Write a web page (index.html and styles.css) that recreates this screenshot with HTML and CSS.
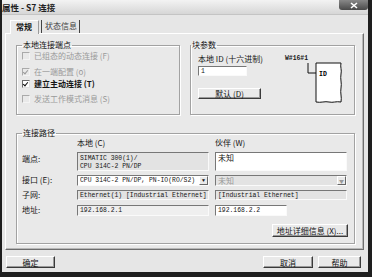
FILE: index.html
```html
<!DOCTYPE html>
<html lang="zh">
<head>
    <meta charset="UTF-8">
    <title>属性 - S7 连接</title>
    <link rel="stylesheet" href="styles.css">
</head>
<body>
    <div class="window">
        <div class="titlebar">
            <span class="title">属性 - S7 连接</span>
            <span class="close">
                <svg width="8" height="7" viewBox="0 0 8 7"><path d="M1 1 L7 6 M7 1 L1 6" stroke="#fff" stroke-width="1.6"/></svg>
            </span>
        </div>

        <div class="tabs">
            <span class="tab active">常规</span>
            <span class="tab">状态信息</span>
        </div>

        <div class="panel">
            <div class="top-row">
                <fieldset class="group local-end">
                    <legend>本地连接端点</legend>
                    <div class="check row1 disabled"><span class="box"></span>已组态的动态连接 (F)</div>
                    <div class="check row2 disabled"><span class="box checked"></span>在一端配置 (o)</div>
                    <div class="check row3"><span class="box checked"></span><b>建立主动连接 (T)</b></div>
                    <div class="check row4 disabled"><span class="box"></span>发送工作模式消息 (S)</div>
                </fieldset>

                <fieldset class="group block-params">
                    <legend>块参数</legend>
                    <div class="block-body">
                        <div class="block-left">
                            <div class="id-label">本地 ID (十六进制)</div>
                            <div class="field white id-input mono">1</div>
                            <button class="btn default-btn">默认 (D)</button>
                        </div>
                        <div class="block-right">
                            <div class="wvalue mono">W#16#1</div>
                            <svg class="diagram" width="40" height="44" viewBox="0 0 40 44">
                                <path d="M3 1 V11 H11" fill="none" stroke="#111" stroke-width="1"/>
                                <path d="M11 1 H36 C35 5 37 8 36 12 C35 17 37 21 36 26 C35 31 37 35 36 40 C31 39 28 41 24 40 C20 39 16 41 11 40 Z" fill="#fff" stroke="#111" stroke-width="1"/>
                                <text x="14" y="14" font-size="6.5" font-weight="bold" font-family="Liberation Mono, monospace">ID</text>
                            </svg>
                        </div>
                    </div>
                </fieldset>
            </div>

            <fieldset class="group path">
                <legend>连接路径</legend>
                <div class="prow head">
                    <span></span>
                    <span>本地 (C)</span>
                    <span>伙伴 (W)</span>
                </div>
                <div class="prow endpoint">
                    <span class="plabel">端点:</span>
                    <div class="field gray mono multi">SIMATIC 300(1)/<br>CPU 314C-2 PN/DP</div>
                    <div class="field white">未知</div>
                </div>
                <div class="prow iface">
                    <span class="plabel">接口 (E):</span>
                    <div class="field white combo mono"><span class="ctext">CPU 314C-2 PN/DP, PN-IO(RO/S2)</span><span class="arrow">▼</span></div>
                    <div class="field gray combo off"><span class="ctext">未知</span><span class="arrow">▼</span></div>
                </div>
                <div class="prow subnet">
                    <span class="plabel">子网:</span>
                    <div class="field gray mono"><span class="ctext">Ethernet(1) [Industrial Ethernet]</span></div>
                    <div class="field gray mono">[Industrial Ethernet]</div>
                </div>
                <div class="prow addr">
                    <span class="plabel">地址:</span>
                    <div class="field light mono">192.168.2.1</div>
                    <div class="field white mono short">192.168.2.2</div>
                </div>
                <div class="detail-row">
                    <button class="btn detail-btn">地址详细信息 (X)...</button>
                </div>
            </fieldset>
        </div>

        <div class="footer">
            <button class="btn ok-btn">确定</button>
            <span class="spacer"></span>
            <button class="btn cancel-btn">取消</button>
            <button class="btn help-btn">帮助</button>
        </div>
    </div>
</body>
</html>
```

FILE: styles.css
```css
* {
    box-sizing: border-box;
}
body {
    margin: 0;
    background: #fff;
    font-family: "Noto Sans CJK SC", sans-serif;
}
.window {
    width: 372px;
    height: 277px;
    background: #e6e6e6;
    border-left: 2px solid #1e1e1e;
    border-right: 4px solid #1e1e1e;
    border-bottom: 5px solid #1e1e1e;
    display: flex;
    flex-direction: column;
    font-size: 8px;
    line-height: 10px;
    color: #151515;
}
.titlebar {
    height: 15px;
    display: flex;
    justify-content: space-between;
    align-items: flex-start;
    background: linear-gradient(#f3f3f3, #d6d6d6);
    border-bottom: 1px solid #c4c4c4;
}
.title {
    font-size: 8.5px;
    line-height: 14px;
    font-weight: bold;
    color: #222;
}
.close {
    width: 29px;
    height: 10px;
    display: flex;
    align-items: center;
    justify-content: center;
    background: linear-gradient(#888, #4a4a4a);
    border-radius: 0 0 3px 3px;
}
.tabs {
    height: 18px;
    display: flex;
    align-items: flex-end;
    padding-left: 8px;
}
.tab {
    height: 13px;
    line-height: 12px;
    white-space: nowrap;
    color: #444;
}
.tab.active {
    width: 29px;
    padding-left: 5px;
    font-weight: bold;
    color: #111;
    border-top: 1px solid #fff;
    border-left: 1px solid #fff;
    border-right: 1px solid #9a9a9a;
    background: #e9e9e9;
    margin-bottom: -1px;
    height: 14px;
    position: relative;
    z-index: 1;
}
.tab + .tab {
    margin-left: 2px;
    padding: 0 2px 0 3px;
    border-left: 1px solid #444;
    border-right: 1px solid #444;
}
.panel {
    margin-left: 3px;
    width: 359px;
    height: 217px;
    border: 1px solid;
    border-color: #fff #6e6e6e #6e6e6e #fff;
    box-shadow: inset -1px -1px 0 #b8b8b8;
    background: #e9e9e9;
    padding: 6px 8px 0 10px;
}
.group {
    margin: 0;
    border: 1px solid #a2a2a2;
    box-shadow: inset 1px 1px 0 #fff, 1px 1px 0 #fff;
    padding: 0;
    min-width: 0;
}
.group legend {
    padding: 0 1px;
    margin-left: 0;
    font-size: 8px;
    line-height: 10px;
    color: #111;
}
.top-row {
    display: flex;
    gap: 10px;
}
.local-end {
    width: 164px;
    padding: 0 0 8px 5px;
}
.check {
    display: flex;
    align-items: center;
    gap: 4px;
    height: 10px;
    line-height: 10px;
}
.check.disabled {
    color: #9a9a9a;
}
.row1 { margin-top: 1px; }
.row2 { margin-top: 6px; }
.row3 { margin-top: 2px; }
.row4 { margin-top: 5px; }
.box {
    width: 8px;
    height: 8px;
    flex: none;
    background: #fff;
    border: 1px solid;
    border-color: #6a6a6a #e0e0e0 #e0e0e0 #6a6a6a;
    position: relative;
}
.disabled .box {
    background: #e9e9e9;
    border-color: #aaa #f4f4f4 #f4f4f4 #aaa;
}
.box.checked::after {
    content: "";
    position: absolute;
    left: 1px;
    top: 0;
    width: 2px;
    height: 4px;
    border: solid #111;
    border-width: 0 1.5px 1.5px 0;
    transform: rotate(40deg);
}
.disabled .box.checked::after {
    border-color: #999;
}
.block-params {
    flex: 1;
    padding: 0 0 8px 0;
}
.block-body {
    display: flex;
    padding-left: 7px;
}
.block-left {
    width: 87px;
}
.id-label {
    margin-top: 4px;
}
.id-input {
    margin-top: 2px;
    width: 49px;
    height: 10px;
}
.default-btn {
    margin-top: 12px;
    width: 63px;
    height: 11px;
}
.block-right {
    display: flex;
    flex-direction: column;
}
.wvalue {
    margin-top: 4px;
    font-weight: bold;
    line-height: 10px;
}
.diagram {
    display: block;
    margin-top: -2px;
    margin-left: 20px;
}
.mono {
    font-family: "Liberation Mono", monospace;
    font-size: 6.4px;
}
.field {
    border: 1px solid;
    border-color: #777 #fafafa #fafafa #777;
    padding: 0 2px;
    line-height: 9px;
    overflow: hidden;
    white-space: nowrap;
}
.field.white {
    background: #fff;
}
.field.gray {
    background: #e3e3e3;
}
.field.light {
    background: #efefef;
}
.field.multi {
    line-height: 8px;
    padding-top: 2px;
}
.combo {
    display: flex;
    align-items: center;
    padding-right: 0;
}
.ctext {
    flex: 1;
    overflow: hidden;
    white-space: nowrap;
}
.combo .arrow {
    width: 9px;
    height: 9px;
    flex: none;
    font-size: 5px;
    line-height: 8px;
    text-align: center;
    color: #111;
    background: #e9e9e9;
    border: 1px solid;
    border-color: #fff #666 #666 #fff;
}
.combo.off {
    color: #9a9a9a;
}
.combo.off .arrow {
    color: #999;
}
.path {
    margin-top: 13px;
    padding: 0 0 6px 5px;
}
.prow {
    display: grid;
    grid-template-columns: 49px 132px 132px;
    column-gap: 6px;
}
.plabel {
    line-height: 10px;
    white-space: nowrap;
}
.head {
    height: 10px;
}
.endpoint {
    margin-top: 4px;
    height: 19px;
}
.endpoint .plabel {
    margin-top: 2px;
}
.iface {
    margin-top: 4px;
    height: 11px;
}
.subnet {
    margin-top: 4px;
    height: 10px;
}
.addr {
    margin-top: 5px;
    height: 11px;
}
.addr .field {
    line-height: 10px;
}
.field.short {
    width: 72px;
}
.detail-row {
    display: flex;
    justify-content: flex-end;
    padding-right: 6px;
    margin-top: 8px;
}
.btn {
    font-family: "Noto Sans CJK SC", sans-serif;
    font-size: 8px;
    line-height: 9px;
    padding: 0;
    color: #111;
    background: #e9e9e9;
    border: 1px solid;
    border-color: #fff #3a3a3a #3a3a3a #fff;
    box-shadow: inset -1px -1px 0 #9a9a9a;
}
.detail-btn {
    width: 76px;
    height: 13px;
}
.footer {
    display: flex;
    margin-top: 6px;
    padding-left: 4px;
}
.footer .btn {
    height: 12px;
}
.spacer {
    flex: 1;
}
.ok-btn {
    width: 49px;
}
.cancel-btn {
    width: 50px;
    margin-right: 5px;
}
.help-btn {
    width: 43px;
    margin-right: 7px;
}
```
